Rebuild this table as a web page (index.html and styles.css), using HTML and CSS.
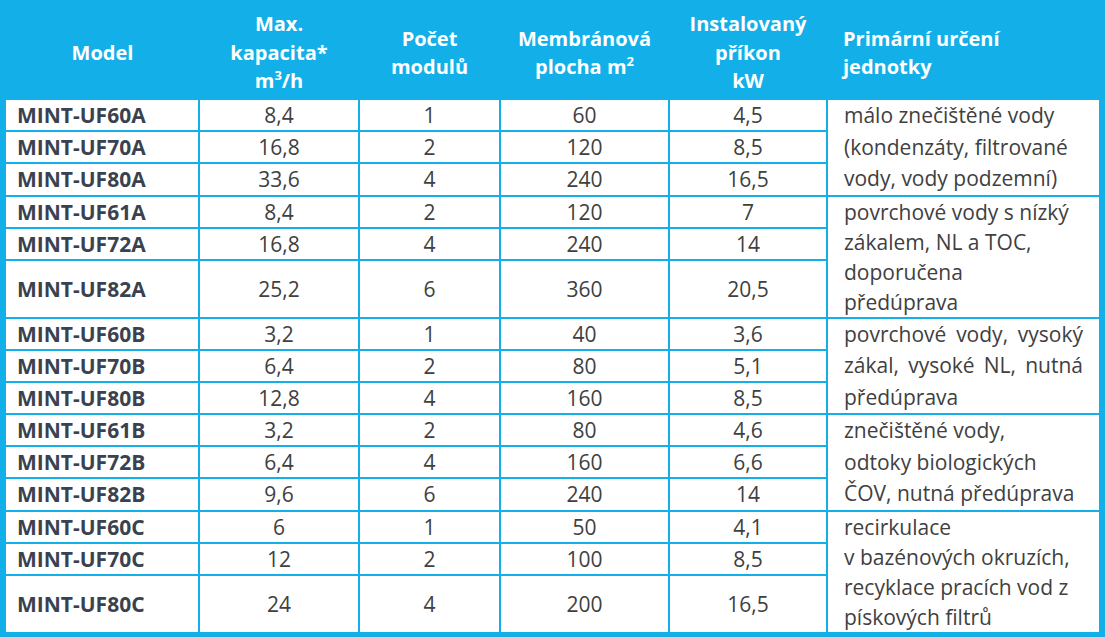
FILE: index.html
```html
<!DOCTYPE html>
<html lang="cs">
<head>
<meta charset="utf-8">
<title>MINT-UF</title>
<link rel="stylesheet" href="styles.css">
</head>
<body>
<table class="spec">
  <colgroup>
    <col class="c1"><col class="c2"><col class="c3"><col class="c4"><col class="c5"><col class="c6">
  </colgroup>
  <thead>
    <tr class="head">
      <th>Model</th>
      <th>Max.<br>kapacita*<br>m<sup>3</sup>/h</th>
      <th>Počet<br>modulů</th>
      <th>Membránová<br>plocha m<sup>2</sup></th>
      <th>Instalovaný<br>příkon<br>kW</th>
      <th class="left">Primární určení<br>jednotky</th>
    </tr>
  </thead>
  <tbody>
    <tr><td class="model">MINT-UF60A</td><td>8,4</td><td>1</td><td>60</td><td>4,5</td><td class="desc" rowspan="3">málo znečištěné vody<br>(kondenzáty, filtrované<br>vody, vody podzemní)</td></tr>
    <tr><td class="model">MINT-UF70A</td><td>16,8</td><td>2</td><td>120</td><td>8,5</td></tr>
    <tr><td class="model">MINT-UF80A</td><td>33,6</td><td>4</td><td>240</td><td>16,5</td></tr>
    <tr><td class="model">MINT-UF61A</td><td>8,4</td><td>2</td><td>120</td><td>7</td><td class="desc four" rowspan="3">povrchové vody s nízký<br>zákalem, NL a TOC,<br>doporučena<br>předúprava</td></tr>
    <tr><td class="model">MINT-UF72A</td><td>16,8</td><td>4</td><td>240</td><td>14</td></tr>
    <tr class="tall"><td class="model">MINT-UF82A</td><td>25,2</td><td>6</td><td>360</td><td>20,5</td></tr>
    <tr><td class="model">MINT-UF60B</td><td>3,2</td><td>1</td><td>40</td><td>3,6</td><td class="desc" rowspan="3"><span class="just">povrchové vody, vysoký</span><span class="just">zákal, vysoké NL, nutná</span>předúprava</td></tr>
    <tr><td class="model">MINT-UF70B</td><td>6,4</td><td>2</td><td>80</td><td>5,1</td></tr>
    <tr><td class="model">MINT-UF80B</td><td>12,8</td><td>4</td><td>160</td><td>8,5</td></tr>
    <tr><td class="model">MINT-UF61B</td><td>3,2</td><td>2</td><td>80</td><td>4,6</td><td class="desc" rowspan="3">znečištěné vody,<br>odtoky biologických<br>ČOV, nutná předúprava</td></tr>
    <tr><td class="model">MINT-UF72B</td><td>6,4</td><td>4</td><td>160</td><td>6,6</td></tr>
    <tr><td class="model">MINT-UF82B</td><td>9,6</td><td>6</td><td>240</td><td>14</td></tr>
    <tr><td class="model">MINT-UF60C</td><td>6</td><td>1</td><td>50</td><td>4,1</td><td class="desc four" rowspan="3">recirkulace<br>v bazénových okruzích,<br>recyklace pracích vod z<br>pískových filtrů</td></tr>
    <tr><td class="model">MINT-UF70C</td><td>12</td><td>2</td><td>100</td><td>8,5</td></tr>
    <tr class="tall last"><td class="model">MINT-UF80C</td><td>24</td><td>4</td><td>200</td><td>16,5</td></tr>
  </tbody>
</table>
</body>
</html>
```
FILE: styles.css
```css
html, body {
  margin: 0;
  padding: 0;
  background: #ffffff;
}

.spec {
  width: 1105px;
  border-collapse: collapse;
  table-layout: fixed;
  border: 6px solid #13afe9;
  font-family: "Open Sans", Lato, sans-serif;
  font-size: 21px;
  color: #404040;
}

.c1 { width: 196px; }
.c2 { width: 160px; }
.c3 { width: 141px; }
.c4 { width: 169px; }
.c5 { width: 158px; }
.c6 { width: 275px; }

.head th {
  background: #13afe9;
  color: #ffffff;
  font-weight: 700;
  font-size: 20px;
  line-height: 28.5px;
  height: 90px;
  padding: 2px 0 0 0;
  text-align: center;
  vertical-align: middle;
  border-bottom: 2px solid #13afe9;
}

.head th.left {
  text-align: left;
  padding-left: 16px;
}

sup {
  font-size: 13px;
  line-height: 0;
  vertical-align: 8px;
}

td {
  border: 2px solid #13afe9;
  height: 30px;
  padding: 0;
  text-align: center;
  vertical-align: middle;
  line-height: 30px;
  white-space: nowrap;
}

tr.tall td {
  height: 55px;
}

td.model {
  text-align: left;
  padding-left: 11px;
  font-weight: 700;
  color: #3a4250;
}

td.desc {
  text-align: left;
  vertical-align: top;
  padding: 0 10px 0 16px;
  line-height: 31.5px;
}

td.desc.four {
  line-height: 30px;
}

.just {
  display: block;
  white-space: normal;
  text-align: justify;
  text-align-last: justify;
  margin-right: 6px;
}
```
